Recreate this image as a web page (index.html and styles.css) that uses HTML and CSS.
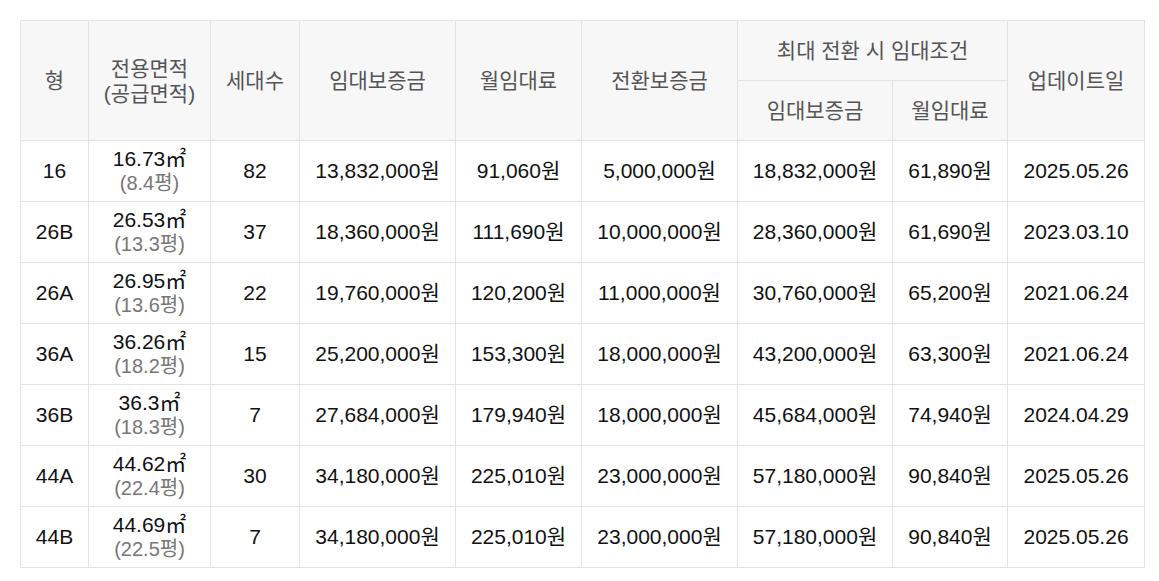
FILE: index.html
```html
<!DOCTYPE html>
<html lang="ko">
<head>
<meta charset="utf-8">
<link rel="stylesheet" href="styles.css">
</head>
<body>
<div class="wrap">
<table class="rent">
  <colgroup>
    <col class="c1"><col class="c2"><col class="c3"><col class="c4"><col class="c5"><col class="c6"><col class="c7"><col class="c8"><col class="c9">
  </colgroup>
  <thead>
    <tr class="h1">
      <th rowspan="2">형</th>
      <th rowspan="2">전용면적<br>(공급면적)</th>
      <th rowspan="2">세대수</th>
      <th rowspan="2">임대보증금</th>
      <th rowspan="2">월임대료</th>
      <th rowspan="2">전환보증금</th>
      <th colspan="2">최대 전환 시 임대조건</th>
      <th rowspan="2">업데이트일</th>
    </tr>
    <tr class="h2">
      <th>임대보증금</th>
      <th>월임대료</th>
    </tr>
  </thead>
  <tbody>
    <tr><td>16</td><td>16.73㎡<br><span class="sub">(8.4평)</span></td><td>82</td><td>13,832,000원</td><td>91,060원</td><td>5,000,000원</td><td>18,832,000원</td><td>61,890원</td><td>2025.05.26</td></tr>
    <tr><td>26B</td><td>26.53㎡<br><span class="sub">(13.3평)</span></td><td>37</td><td>18,360,000원</td><td>111,690원</td><td>10,000,000원</td><td>28,360,000원</td><td>61,690원</td><td>2023.03.10</td></tr>
    <tr><td>26A</td><td>26.95㎡<br><span class="sub">(13.6평)</span></td><td>22</td><td>19,760,000원</td><td>120,200원</td><td>11,000,000원</td><td>30,760,000원</td><td>65,200원</td><td>2021.06.24</td></tr>
    <tr><td>36A</td><td>36.26㎡<br><span class="sub">(18.2평)</span></td><td>15</td><td>25,200,000원</td><td>153,300원</td><td>18,000,000원</td><td>43,200,000원</td><td>63,300원</td><td>2021.06.24</td></tr>
    <tr><td>36B</td><td>36.3㎡<br><span class="sub">(18.3평)</span></td><td>7</td><td>27,684,000원</td><td>179,940원</td><td>18,000,000원</td><td>45,684,000원</td><td>74,940원</td><td>2024.04.29</td></tr>
    <tr><td>44A</td><td>44.62㎡<br><span class="sub">(22.4평)</span></td><td>30</td><td>34,180,000원</td><td>225,010원</td><td>23,000,000원</td><td>57,180,000원</td><td>90,840원</td><td>2025.05.26</td></tr>
    <tr><td>44B</td><td>44.69㎡<br><span class="sub">(22.5평)</span></td><td>7</td><td>34,180,000원</td><td>225,010원</td><td>23,000,000원</td><td>57,180,000원</td><td>90,840원</td><td>2025.05.26</td></tr>
  </tbody>
</table>
</div>
</body>
</html>
```
FILE: styles.css
```css
html, body {
  margin: 0;
  padding: 0;
  background: #fff;
}
.wrap {
  padding: 20px 15px 0 20px;
}
.rent {
  width: 1124px;
  table-layout: fixed;
  border-collapse: collapse;
  font-family: "Liberation Sans", "Noto Sans CJK KR", sans-serif;
  font-size: 21px;
  color: #111;
  border-top: 1px solid #cfcfcf;
}
.c1 { width: 68px; }
.c2 { width: 122px; }
.c3 { width: 89px; }
.c4 { width: 156px; }
.c5 { width: 126px; }
.c6 { width: 156px; }
.c7 { width: 155px; }
.c8 { width: 115px; }
.c9 { width: 137px; }
.rent th, .rent td {
  border: 1px solid #e3e3e3;
  text-align: center;
  vertical-align: middle;
  padding: 0;
  line-height: 25px;
}
.rent th {
  background: #f7f7f7;
  color: #555;
  font-weight: normal;
  font-size: 21px;
}
.rent tr.h1 { height: 60px; }
.rent tr.h2 { height: 60px; }
.rent tbody tr { height: 61px; }
.rent td { line-height: 24px; }
.sub {
  color: #777;
  font-size: 20px;
}
```
